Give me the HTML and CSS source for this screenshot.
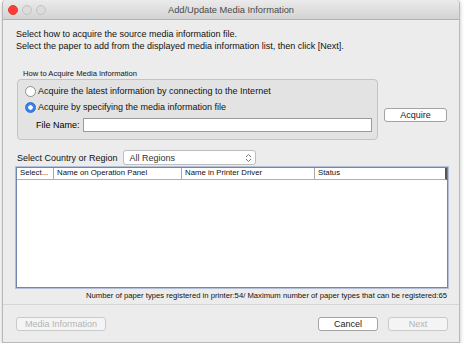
FILE: index.html
```html
<!DOCTYPE html>
<html lang="en">
<head>
  <meta charset="UTF-8">
  <title>Add/Update Media Information</title>
  <link rel="stylesheet" href="styles.css">
</head>
<body>

  <div class="window">
    <!-- Title Bar -->
    <div class="titlebar">
      <div class="lights">
        <span class="light close"></span>
        <span class="light"></span>
        <span class="light"></span>
      </div>
      <div class="title">Add/Update Media Information</div>
    </div>

    <div class="content">
      <p class="intro">Select how to acquire the source media information file.<br>
      Select the paper to add from the displayed media information list, then click [Next].</p>

      <!-- Acquire Section -->
      <div class="group-label">How to Acquire Media Information</div>
      <div class="acquire-row">
        <div class="group-box">
          <label class="radio-row"><span class="radio"></span>Acquire the latest information by connecting to the Internet</label>
          <label class="radio-row"><span class="radio checked"></span>Acquire by specifying the media information file</label>
          <div class="file-row">
            <span class="file-label">File Name:</span>
            <div class="text-field"></div>
          </div>
        </div>
        <button class="btn acquire-btn">Acquire</button>
      </div>

      <!-- Region Select -->
      <div class="region-row">
        <span>Select Country or Region</span>
        <div class="select">
          <span>All Regions</span>
          <svg class="updown" width="7" height="10" viewBox="0 0 7 10">
            <path d="M1 4 L3.5 1.5 L6 4 M1 6 L3.5 8.5 L6 6" fill="none" stroke="#777" stroke-width="1"/>
          </svg>
        </div>
      </div>

      <!-- Media List -->
      <div class="list">
        <div class="list-header">
          <div class="col col-select">Select...</div>
          <div class="col col-panel">Name on Operation Panel</div>
          <div class="col col-driver">Name in Printer Driver</div>
          <div class="col col-status">Status</div>
        </div>
      </div>

      <p class="count">Number of paper types registered in printer:54/ Maximum number of paper types that can be registered:65</p>
    </div>

    <!-- Footer Buttons -->
    <div class="footer">
      <button class="btn disabled media-btn">Media Information</button>
      <div class="footer-right">
        <button class="btn cancel-btn">Cancel</button>
        <button class="btn disabled next-btn">Next</button>
      </div>
    </div>
  </div>

</body>
</html>
```

FILE: styles.css
```css
/* General Page Styles */
body {
  margin: 0;
  padding: 0;
  background-color: #ffffff;
  font-family: 'Liberation Sans', Arial, sans-serif;
  color: #111;
}

/* Window */
.window {
  margin-left: 2px;
  width: 458px;
  height: 343px;
  background-color: #ececec;
  border: 1px solid #b9b9b9;
  border-top: none;
  border-radius: 4px 4px 0 0;
  box-shadow: 0 1px 4px rgba(0, 0, 0, 0.25);
  display: flex;
  flex-direction: column;
  box-sizing: border-box;
}

.titlebar {
  height: 20px;
  background: linear-gradient(#ebebeb, #d3d3d3);
  border-bottom: 1px solid #b1b1b1;
  border-radius: 4px 4px 0 0;
  display: flex;
  align-items: center;
  position: relative;
  box-sizing: border-box;
}

.lights {
  position: absolute;
  left: 5px;
  top: 5px;
  display: flex;
  gap: 4px;
}

.light {
  width: 10px;
  height: 10px;
  border-radius: 50%;
  border: 1px solid #c2c2c2;
  background-color: #dcdcdc;
  box-sizing: border-box;
}

.light.close {
  background-color: #fc3d39;
  border-color: #e33e2e;
}

.title {
  flex: 1;
  text-align: center;
  font-size: 9.3px;
  color: #4a4a4a;
}

.content {
  padding: 0 11px 0 12px;
  font-size: 9px;
}

.intro {
  margin: 8px 0 0 1px;
  line-height: 12px;
}

/* Acquire Section */
.group-label {
  font-size: 7.6px;
  margin: 17px 0 0 8px;
  line-height: 10px;
}

.acquire-row {
  display: flex;
  align-items: flex-end;
  margin-top: 0;
}

.group-box {
  width: 361px;
  height: 61px;
  margin-left: 2px;
  border: 1px solid #c3c3c3;
  border-radius: 4px;
  background-color: #e3e3e3;
  box-sizing: border-box;
  padding: 3px 0 0 7px;
}

.radio-row {
  display: flex;
  align-items: center;
  height: 16px;
}

.radio {
  width: 11px;
  height: 11px;
  border-radius: 50%;
  border: 1px solid #8f8f8f;
  background-color: #ffffff;
  box-sizing: border-box;
  margin-right: 2px;
}

.radio.checked {
  border-color: #2f6fd6;
  background: radial-gradient(circle, #ffffff 0 2px, #3a80e8 2.5px);
}

.file-row {
  display: flex;
  align-items: center;
  margin-top: 3px;
}

.file-label {
  width: 47px;
  padding-left: 11px;
  color: #000;
}

.text-field {
  width: 289px;
  height: 14px;
  background-color: #ffffff;
  border: 1px solid #9b9b9b;
  box-sizing: border-box;
}

/* Buttons */
.btn {
  font-family: 'Liberation Sans', Arial, sans-serif;
  font-size: 9px;
  color: #222;
  background-color: #ffffff;
  border: 1px solid #a3a3a3;
  border-radius: 3px;
  height: 14px;
  padding: 0;
  box-sizing: border-box;
  line-height: 12px;
}

.btn.disabled {
  color: #b4b4b4;
  border-color: #cacaca;
  background-color: #f4f4f4;
}

.acquire-btn {
  width: 63px;
  margin: 0 0 18px 6px;
}

/* Region Select */
.region-row {
  display: flex;
  align-items: center;
  margin-top: 10px;
  margin-left: 2px;
}

.select {
  width: 133px;
  height: 15px;
  margin-left: 5px;
  background-color: #ffffff;
  border: 1px solid #bdbdbd;
  border-radius: 3px;
  box-sizing: border-box;
  display: flex;
  align-items: center;
  justify-content: space-between;
  padding: 0 3px 0 6px;
  color: #333;
}

/* Media List */
.list {
  margin-top: 2px;
  height: 121px;
  background-color: #ffffff;
  border: 1px solid #7287b0;
  box-shadow: 0 0 0 1px #b3c0d8;
  box-sizing: border-box;
  margin-left: 1px;
}

.list-header {
  display: flex;
  height: 11px;
  border-bottom: 1px solid #b0b0b0;
  border-right: 2px solid #555;
  font-size: 7.8px;
  line-height: 10px;
}

.col {
  padding-left: 3px;
  border-left: 1px solid #a8a8a8;
  box-sizing: border-box;
  white-space: nowrap;
  overflow: hidden;
}

.col-select {
  width: 36px;
  border-left: none;
}

.col-panel {
  width: 128px;
}

.col-driver {
  width: 133px;
}

.col-status {
  flex: 1;
}

.count {
  margin: 3px 1px 0 0;
  text-align: right;
  font-size: 7.7px;
  line-height: 10px;
}

/* Footer */
.footer {
  margin-top: 3px;
  border-top: 1px solid #d6d6d6;
  padding: 12px 11px 0 13px;
  display: flex;
  justify-content: space-between;
}

.media-btn {
  width: 90px;
}

.footer-right {
  display: flex;
  gap: 10px;
}

.cancel-btn, .next-btn {
  width: 60px;
}
```
